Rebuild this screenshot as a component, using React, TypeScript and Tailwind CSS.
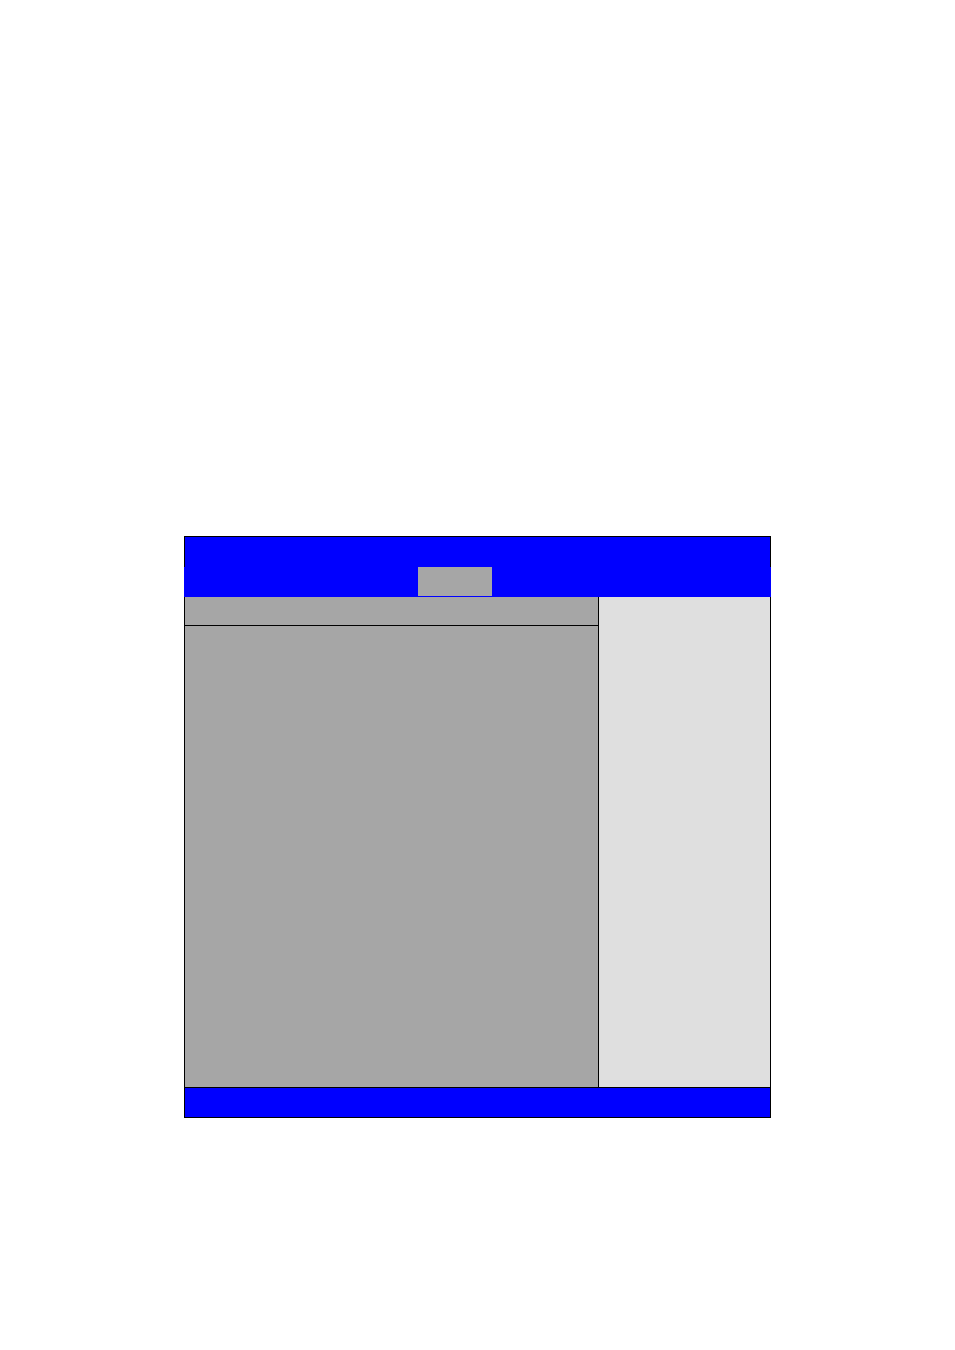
import React from "react";

const SetupScreen = () => {
  return (
    <div className="min-h-[1350px] bg-white pt-[536px] pl-[184px]">
      <div className="w-[587px]">
        {/* title bar with the active tab */}
        <div className="border-t border-black bg-[#0000ff]">
          <div className="h-[30px] border-x border-black" />
          <div className="flex h-[30px] items-start pl-[234px]">
            <div className="h-[29px] w-[74px] bg-[#a6a6a6]" />
          </div>
        </div>

        <div className="flex h-[490px] border-x border-black">
          <div className="flex w-[413px] flex-col bg-[#a6a6a6]">
            <div className="h-[29px] border-b border-black" />
            <div className="flex-1" />
          </div>
          <div className="flex-1 border-l border-black bg-[#dfdfdf]" />
        </div>

        <div className="h-[31px] border border-black bg-[#0000ff]" />
      </div>
    </div>
  );
};

export default function App() {
  return <SetupScreen />;
}
